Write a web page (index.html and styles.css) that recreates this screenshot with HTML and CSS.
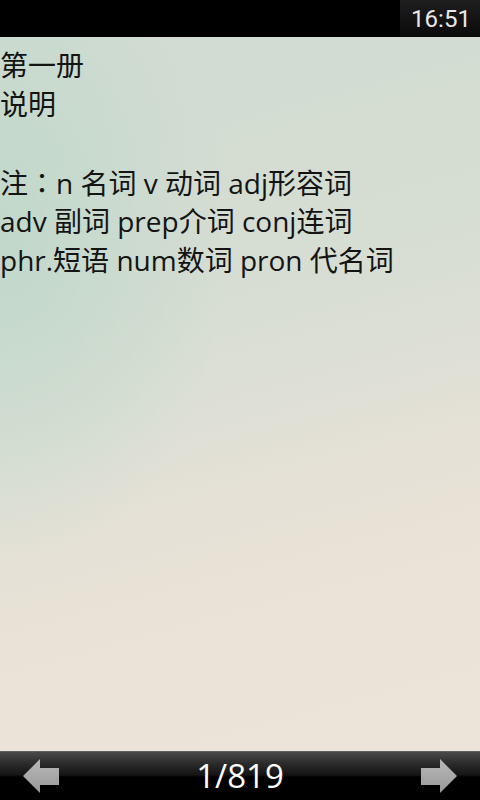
FILE: index.html
```html
<!DOCTYPE html>
<html>
<head>
<meta charset="utf-8">
<link rel="stylesheet" href="styles.css">
</head>
<body>
<div class="screen">
  <div class="statusbar">
    <div class="clock">16:51</div>
  </div>
  <div class="page">
    <div class="line">第一册</div>
    <div class="line">说明</div>
    <div class="line">&nbsp;</div>
    <div class="line">注<span class="colon">：</span>n 名词 v 动词 adj形容词</div>
    <div class="line">adv 副词 prep介词 conj连词</div>
    <div class="line">phr.短语 num数词 pron 代名词</div>
  </div>
  <div class="navbar">
    <svg class="arrow" width="40" height="40" viewBox="0 0 40 40"><defs><linearGradient id="ag" x1="0" y1="0" x2="0" y2="1"><stop offset="0" stop-color="#b8b8b8"/><stop offset="1" stop-color="#9a9a9a"/></linearGradient></defs><path d="M1 20 L18 3 L18 12 L37 12 L37 29 L18 29 L18 37 Z" fill="url(#ag)"/></svg>
    <div class="pagenum">1/819</div>
    <svg class="arrow" width="40" height="40" viewBox="0 0 40 40"><path d="M39 20 L22 3 L22 12 L3 12 L3 29 L22 29 L22 37 Z" fill="url(#ag)"/></svg>
  </div>
</div>
</body>
</html>
```
FILE: styles.css
```css
html, body {
  margin: 0;
  padding: 0;
}
body {
  width: 480px;
  height: 800px;
  overflow: hidden;
  background: #000;
}
.screen {
  width: 480px;
  height: 800px;
  display: flex;
  flex-direction: column;
}
.statusbar {
  height: 37px;
  background: #000;
  display: flex;
  justify-content: flex-end;
  flex: none;
}
.clock {
  width: 80px;
  height: 37px;
  background: linear-gradient(to bottom, #1e1e1e, #0a0a0a);
  color: #e8e8e8;
  font-family: "Roboto", "Open Sans", sans-serif;
  font-size: 24px;
  line-height: 38px;
  text-align: center;
  padding-left: 2px;
  box-sizing: border-box;
}
.page {
  flex: 1;
  background:
    radial-gradient(ellipse 230px 330px at 0px 200px, rgba(175,212,196,0.55), rgba(175,212,196,0) 100%),
    linear-gradient(165deg, #d2dcd2 0%, #d6ddd3 35%, #dcdfd5 48%, #e5e1d6 62%, #ebe3d7 80%, #ece4d8 100%);
  padding-top: 47px;
  color: #141414;
  font-family: "Open Sans", "Noto Sans CJK SC", sans-serif;
  font-size: 28px;
  line-height: 39px;
}
.line {
  height: 39px;
  white-space: nowrap;
}
.colon {
  font-family: "Noto Sans CJK TC", sans-serif;
}
.page .line:first-child {
  margin-top: -38px;
}
.navbar {
  height: 48px;
  flex: none;
  background: linear-gradient(to bottom, #4a4a4a 0%, #2a2a2a 25%, #141414 48%, #000 52%, #000 100%);
  border-top: 1px solid #606060;
  display: flex;
  align-items: center;
  justify-content: space-between;
  padding: 0 22px;
}
.pagenum {
  color: #fff;
  font-family: "Open Sans", sans-serif;
  font-size: 33px;
  line-height: 48px;
}
.arrow {
  display: block;
}
```
